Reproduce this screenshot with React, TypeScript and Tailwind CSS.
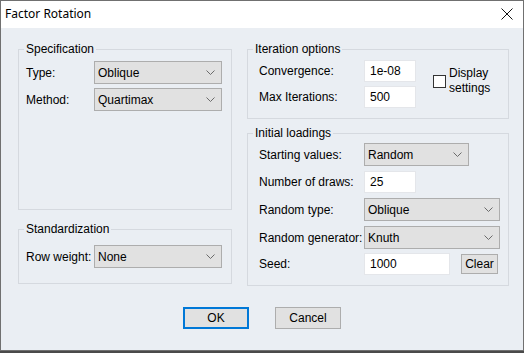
import React from 'react';

const FONT = { fontFamily: '"Liberation Sans", Arial, sans-serif' };

function Chevron() {
  return (
    <svg width="9" height="5" viewBox="0 0 9 5" className="shrink-0">
      <polyline points="0.5,0.5 4.5,4.5 8.5,0.5" fill="none" stroke="#6b6b6b" strokeWidth="1" />
    </svg>
  );
}

function Combo({ value, className }: { value: string; className: string }) {
  return (
    <div className={`flex h-[23px] items-center justify-between border border-[#adadad] bg-[#e1e1e1] pl-[3px] pr-[6px] ${className}`}>
      <span>{value}</span>
      <Chevron />
    </div>
  );
}

function Field({ value, className }: { value: string; className: string }) {
  return (
    <div className={`flex h-[22px] items-center border border-[#e4e6ea] bg-white pl-[5px] ${className}`}>{value}</div>
  );
}

function Row({ label, labelW, children, className = '' }: { label: string; labelW: string; children: React.ReactNode; className?: string }) {
  return (
    <div className={`flex items-center ${className}`}>
      <span className={`shrink-0 ${labelW}`}>{label}</span>
      {children}
    </div>
  );
}

function Btn({ label, primary = false }: { label: string; primary?: boolean }) {
  return (
    <button
      type="button"
      className={`flex h-[22px] w-[66px] items-center justify-center bg-[#e1e1e1] ${primary ? 'border-2 border-[#0078d7]' : 'border border-[#adadad]'}`}
    >
      {label}
    </button>
  );
}

export default function App() {
  return (
    <div className="h-[353px] w-[524px] bg-[#4a4a4a] text-[12px] leading-[14px] text-black" style={FONT}>
      <div className="flex h-[351px] flex-col border border-[#707070] bg-[#eaeef3]">
        {/* title bar */}
        <div className="flex h-[27px] shrink-0 items-center justify-between bg-white pb-[1px] pl-[4px] pr-[10px]">
          <span className="text-[12px]" style={{ fontFamily: '"Noto Sans", "Liberation Sans", sans-serif' }}>
            Factor Rotation
          </span>
          <svg width="12" height="12" viewBox="0 0 12 12">
            <path d="M0.5 0.5 L11.5 11.5 M11.5 0.5 L0.5 11.5" stroke="#111" strokeWidth="1" />
          </svg>
        </div>

        <div className="flex flex-col pl-[17px] pr-[14px] pt-[14px]">
          <div className="flex gap-[15px]">
            {/* left column */}
            <div className="flex w-[215px] flex-col">
              <fieldset className="h-[168px] border border-[#d5d9df] px-[7px]">
                <legend className="-ml-[2px] px-[2px]">Specification</legend>
                <Row label="Type:" labelW="w-[68px]" className="mt-[5px]">
                  <Combo value="Oblique" className="w-[128px]" />
                </Row>
                <Row label="Method:" labelW="w-[68px]" className="mt-[4px]">
                  <Combo value="Quartimax" className="w-[128px]" />
                </Row>
              </fieldset>
              <fieldset className="mt-[12px] h-[62px] border border-[#d5d9df] px-[7px]">
                <legend className="-ml-[2px] px-[2px]">Standardization</legend>
                <Row label="Row weight:" labelW="w-[68px]" className="mt-[9px]">
                  <Combo value="None" className="w-[128px]" />
                </Row>
              </fieldset>
            </div>

            {/* right column */}
            <div className="flex w-[263px] flex-col">
              <fieldset className="h-[77px] border border-[#d5d9df] pl-[11px] pr-[8px]">
                <legend className="-ml-[6px] px-[2px]">Iteration options</legend>
                <div className="flex items-center">
                  <div className="flex flex-col">
                    <Row label="Convergence:" labelW="w-[105px]" className="mt-[4px]">
                      <Field value="1e-08" className="w-[52px]" />
                    </Row>
                    <Row label="Max Iterations:" labelW="w-[105px]" className="mt-[4px]">
                      <Field value="500" className="w-[52px]" />
                    </Row>
                  </div>
                  <div className="-mt-[2px] ml-[17px] flex items-center gap-[3px]">
                    <div className="h-[13px] w-[13px] border border-[#333] bg-white" />
                    <div className="flex flex-col leading-[15px]">
                      <span>Display</span>
                      <span>settings</span>
                    </div>
                  </div>
                </div>
              </fieldset>

              <fieldset className="mt-[7px] h-[160px] border border-[#d5d9df] pl-[11px] pr-[8px]">
                <legend className="-ml-[6px] px-[2px]">Initial loadings</legend>
                <Row label="Starting values:" labelW="w-[105px]" className="mt-[3px]">
                  <Combo value="Random" className="w-[105px]" />
                </Row>
                <Row label="Number of draws:" labelW="w-[105px]" className="mt-[5px]">
                  <Field value="25" className="w-[52px]" />
                </Row>
                <Row label="Random type:" labelW="w-[105px]" className="mt-[5px]">
                  <Combo value="Oblique" className="w-[136px]" />
                </Row>
                <Row label="Random generator:" labelW="w-[105px]" className="mt-[5px]">
                  <Combo value="Knuth" className="w-[136px]" />
                </Row>
                <Row label="Seed:" labelW="w-[105px]" className="mt-[4px]">
                  <Field value="1000" className="w-[86px]" />
                  <button type="button" className="ml-[11px] flex h-[20px] w-[37px] items-center justify-center border border-[#adadad] bg-[#e1e1e1]">
                    Clear
                  </button>
                </Row>
              </fieldset>
            </div>
          </div>

          <div className="mt-[21px] flex justify-center gap-[26px] pr-[3px]">
            <Btn label="OK" primary />
            <Btn label="Cancel" />
          </div>
        </div>
      </div>
    </div>
  );
}
